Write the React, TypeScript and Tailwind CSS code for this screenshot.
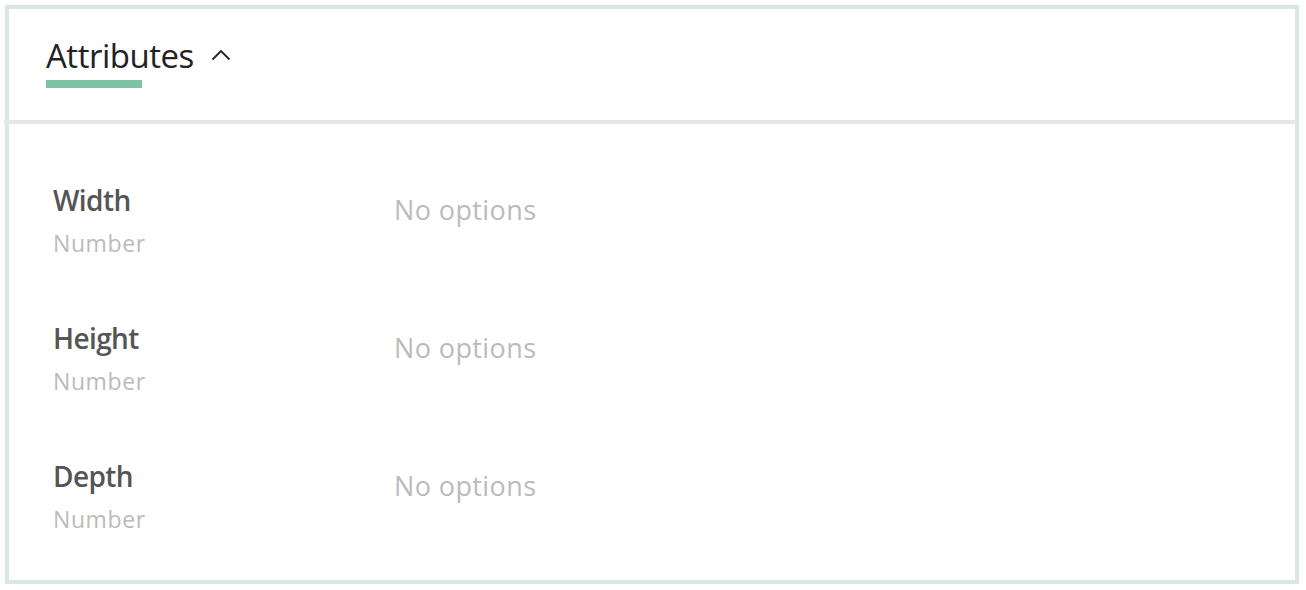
const attributes = [
  { name: "Width", type: "Number" },
  { name: "Height", type: "Number" },
  { name: "Depth", type: "Number" },
];

const App = () => {
  return (
    <div className="w-[1306px] h-[590px] bg-white p-[5px] pr-[7px] pb-[6px] font-['Open_Sans',sans-serif]">
      <div className="h-full border-[4px] border-[#d9e8e2] flex flex-col">
        {/* Header */}
        <div className="h-[111px] shrink-0 pl-[37px] pt-[26px]">
          <div className="flex items-center gap-[17px]">
            <h2 className="text-[33px] leading-[42px] font-medium text-[#222] tracking-[-0.5px]">
              Attributes
            </h2>
            <svg width="20" height="12" viewBox="0 0 20 12" className="mt-[-2px]">
              <polyline
                points="1.5,10.5 10,2 18.5,10.5"
                fill="none"
                stroke="#222"
                strokeWidth="1.8"
              />
            </svg>
          </div>
          <div className="w-[96px] h-[8px] bg-[#7cc4a4] mt-[3px]" />
        </div>
        <div className="h-[4px] shrink-0 bg-[#e6e6e6] -ml-[5px] -mr-[1px]" />

        {/* Body */}
        <div className="pl-[44px] pt-[58px] flex flex-col min-h-0 overflow-hidden">
          {attributes.map((a) => (
            <div key={a.name} className="flex h-[138px] shrink-0">
              <div className="w-[341px]">
                <div className="text-[28px] leading-[36px] font-semibold text-[#555] tracking-[-0.6px]">
                  {a.name}
                </div>
                <div className="text-[23px] leading-[32px] text-[#bbb] mt-[9px] tracking-[0.6px]">
                  {a.type}
                </div>
              </div>
              <div className="text-[27px] leading-[36px] text-[#bbb] mt-[10px] tracking-[0.4px]">
                No options
              </div>
            </div>
          ))}
        </div>
      </div>
    </div>
  );
};

export default App;
